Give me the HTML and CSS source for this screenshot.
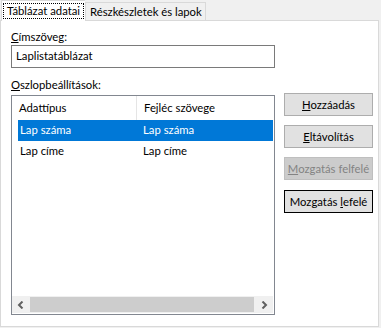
FILE: index.html
```html
<!DOCTYPE html>
<html lang="hu">
<head>
    <meta charset="UTF-8">
    <title>Táblázat adatai</title>
    <link rel="stylesheet" href="styles.css">
</head>
<body>

<div class="tabs">
    <div class="tab active"><span class="focus">Táblázat adatai</span></div>
    <div class="tab">Részkészletek és lapok</div>
</div>

<div class="panel">
    <div class="main">
        <label class="label"><u>C</u>ímszöveg:</label>
        <div class="textbox">Laplistatáblázat</div>

        <label class="label label-list"><u>O</u>szlopbeállítások:</label>
        <div class="list">
            <div class="list-head">
                <div class="col col-first">Adattípus</div>
                <div class="col col-sep">Fejléc szövege</div>
            </div>
            <div class="row selected">
                <div class="col">Lap száma</div>
                <div class="col">Lap száma</div>
            </div>
            <div class="row">
                <div class="col">Lap címe</div>
                <div class="col">Lap címe</div>
            </div>
            <div class="list-fill"></div>
            <div class="hscroll">
                <div class="arrow">
                    <svg width="8" height="8" viewBox="0 0 8 8"><path d="M5.5 0.5 L2 4 L5.5 7.5" fill="none" stroke="#606060" stroke-width="2"/></svg>
                </div>
                <div class="thumb"></div>
                <div class="arrow">
                    <svg width="8" height="8" viewBox="0 0 8 8"><path d="M2.5 0.5 L6 4 L2.5 7.5" fill="none" stroke="#606060" stroke-width="2"/></svg>
                </div>
            </div>
        </div>
    </div>

    <div class="buttons">
        <button class="btn"><u>H</u>ozzáadás</button>
        <button class="btn"><u>E</u>ltávolítás</button>
        <button class="btn" disabled><u>M</u>ozgatás felfelé</button>
        <button class="btn default">Mozgatás <u>l</u>efelé</button>
    </div>
</div>

</body>
</html>
```

FILE: styles.css
```css
body {
    margin: 0;
    background: #f0f0f0;
    font-family: Lato, "Noto Sans", sans-serif;
    font-size: 11.3px;
    color: #000;
    width: 381px;
    height: 328px;
    overflow: hidden;
}
.tabs {
    display: flex;
    align-items: flex-start;
    height: 20px;
    padding-left: 1px;
}
.tab {
    height: 18px;
    margin-top: 2px;
    padding: 0 3px 0 4px;
    line-height: 17px;
    background: #f0f0f0;
    border: 1px solid #d9d9d9;
    border-bottom: none;
    box-sizing: border-box;
    white-space: nowrap;
}
.tab.active {
    position: relative;
    z-index: 1;
    height: 21px;
    margin-top: 0;
    padding: 3px 2px 0 2px;
    background: #fff;
    border-right: none;
    width: 84px;
}
.focus {
    display: block;
    outline: 1px dotted #000;
    padding: 0 2px 0 3px;
    line-height: 14px;
    white-space: nowrap;
}
.panel {
    display: flex;
    width: 379px;
    height: 307px;
    box-sizing: border-box;
    background: #fff;
    border: 1px solid #d9d9d9;
    padding: 8px 0 0 10px;
}
.main {
    width: 264px;
    display: flex;
    flex-direction: column;
}
.label {
    line-height: 15px;
    height: 16px;
}
.label-list {
    margin-top: 9px;
    height: 18px;
}
.textbox {
    height: 23px;
    box-sizing: border-box;
    border: 1px solid #7a7a7a;
    padding: 0 4px;
    line-height: 20px;
}
.list {
    height: 220px;
    box-sizing: border-box;
    border: 1px solid #828790;
    display: flex;
    flex-direction: column;
}
.list-head, .row {
    display: flex;
    height: 24px;
    line-height: 23px;
}
.row {
    height: 21px;
    line-height: 20px;
    margin-left: 6px;
    margin-right: 1px;
}
.col {
    width: 125px;
    padding-left: 2px;
    box-sizing: border-box;
    white-space: nowrap;
}
.list-head .col {
    padding-left: 7px;
}
.list-head .col-first {
    width: 125px;
    border-right: 1px solid #e5e5e5;
}
.row .col:first-child {
    width: 125px;
}
.row .col + .col {
    padding-left: 0;
}
.selected {
    background: #0078d7;
    color: #fff;
}
.list-fill {
    flex: 1;
}
.hscroll {
    display: flex;
    height: 17px;
    margin: 0 1px 1px 0;
    background: #f0f0f0;
}
.arrow {
    width: 18px;
    display: flex;
    align-items: center;
    justify-content: center;
}
.thumb {
    flex: 1;
    background: #cdcdcd;
    margin: 1px 1px 1px 0;
}
.buttons {
    display: flex;
    flex-direction: column;
    gap: 9px;
    margin: 64px 0 0 9px;
}
.btn {
    width: 89px;
    height: 23px;
    padding: 0;
    font-family: inherit;
    font-size: 11.3px;
    color: #000;
    white-space: nowrap;
    background: #e1e1e1;
    border: 1px solid #adadad;
}
.btn:disabled {
    background: #cccccc;
    border-color: #bfbfbf;
    color: #838383;
}
.btn.default {
    border-color: #000;
    margin-top: 1px;
}
```
